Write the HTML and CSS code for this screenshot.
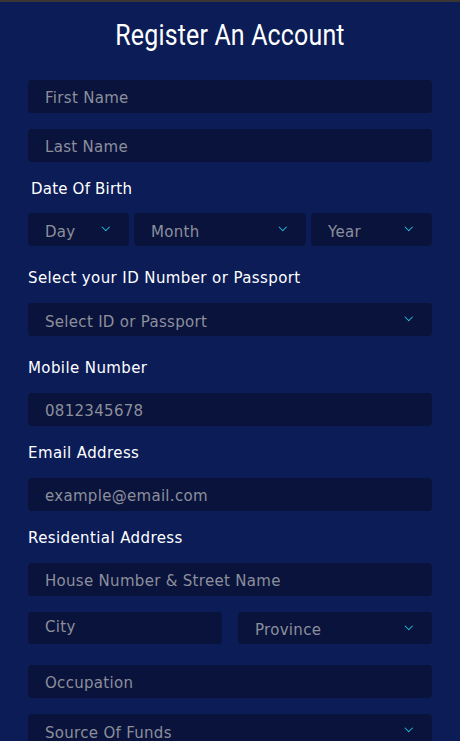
FILE: index.html
```html
<!DOCTYPE html>
<html lang="en">
<head>
    <meta charset="UTF-8">
    <meta name="viewport" content="width=device-width, initial-scale=1.0">
    <title>Register An Account</title>
    <link rel="stylesheet" href="styles.css">
</head>
<body>
    <div class="top-bar"></div>

    <div class="page">
        <h1 class="title">Register An Account</h1>

        <form class="register-form">
            <div class="field">First Name</div>
            <div class="field">Last Name</div>

            <div class="label label-dob">Date Of Birth</div>
            <div class="dob-row">
                <div class="field select">Day <span class="chev"></span></div>
                <div class="field select">Month <span class="chev"></span></div>
                <div class="field select">Year <span class="chev"></span></div>
            </div>

            <div class="label">Select your ID Number or Passport</div>
            <div class="field select">Select ID or Passport <span class="chev"></span></div>

            <div class="label label-space">Mobile Number</div>
            <div class="field">0812345678</div>

            <div class="label">Email Address</div>
            <div class="field">example@email.com</div>

            <div class="label">Residential Address</div>
            <div class="field">House Number &amp; Street Name</div>
            <div class="two-col">
                <div class="field city">City</div>
                <div class="field select province">Province <span class="chev"></span></div>
            </div>

            <div class="field occupation">Occupation</div>
            <div class="field select">Source Of Funds <span class="chev"></span></div>
        </form>
    </div>
</body>
</html>
```

FILE: styles.css
```css
body {
    margin: 0;
    background-color: #0b1c57;
    font-family: "DejaVu Sans", sans-serif;
    overflow: hidden;
}

.top-bar {
    height: 2px;
    background-color: #3b3533;
}

.page {
    padding: 0 28px;
}

/* タイトル */
.title {
    margin: 0;
    height: 66px;
    display: flex;
    align-items: center;
    justify-content: center;
    color: #ffffff;
    font-family: Roboto, sans-serif;
    font-weight: 400;
    font-size: 29px;
    transform: scaleX(0.86);
    letter-spacing: 0.2px;
}

.register-form {
    display: flex;
    flex-direction: column;
    padding-top: 12px;
}

/* 入力欄 */
.field {
    height: 33px;
    box-sizing: border-box;
    display: flex;
    align-items: center;
    padding: 2px 17px 0;
    margin-bottom: 16px;
    background-color: #09133b;
    border-radius: 4px;
    color: #8c8f9c;
    font-size: 15px;
    letter-spacing: 0.3px;
}

.select {
    justify-content: space-between;
    padding-right: 21px;
    padding-top: 4px;
}

.chev {
    width: 4.5px;
    height: 4.5px;
    border-right: 1.5px solid #27c3e6;
    border-bottom: 1.5px solid #27c3e6;
    transform: rotate(45deg);
    margin-top: -9px;
}

.label {
    color: #ffffff;
    font-size: 15px;
    letter-spacing: 0.4px;
    height: 20px;
    line-height: 22px;
    margin: 0 0 16px;
}

.label-space {
    margin-top: 5px;
}

.label-dob {
    padding-left: 3px;
    margin-bottom: 15px;
    letter-spacing: 0.2px;
}

.dob-row {
    display: grid;
    grid-template-columns: 101px 172px 1fr;
    gap: 5px;
    margin-bottom: 21px;
}

.dob-row .field {
    margin-bottom: 0;
}

.two-col {
    display: grid;
    grid-template-columns: 1fr 1fr;
    gap: 16px;
}

.city {
    align-items: flex-start;
    padding-top: 6px;
}

.two-col .field {
    height: 32px;
    margin-bottom: 21px;
}
```
